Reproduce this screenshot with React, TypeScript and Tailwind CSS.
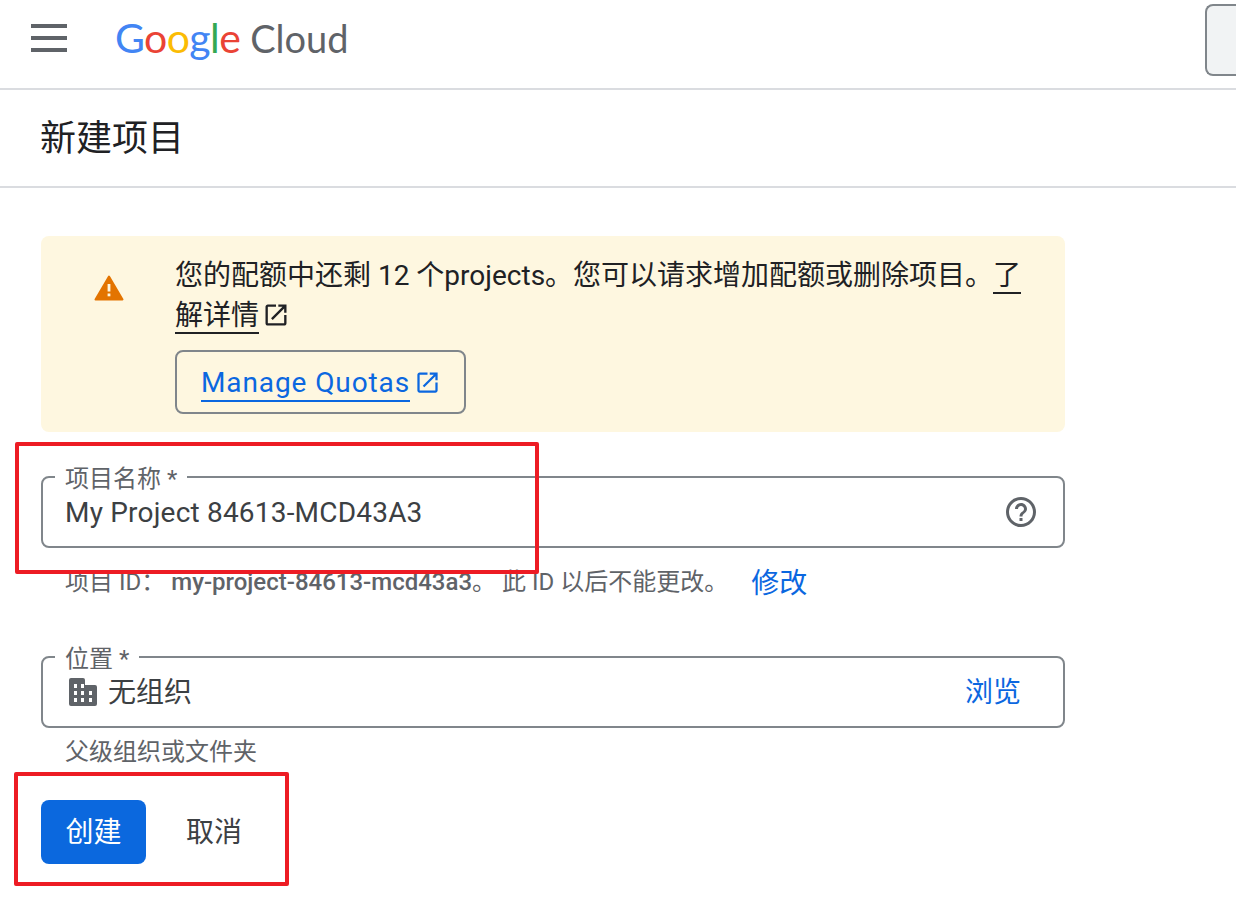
import React from "react";

const OpenIcon = ({ className }: { className: string }) => (
  <svg viewBox="0 0 24 24" fill="currentColor" className={className}>
    <path d="M19 19H5V5h7V3H5c-1.11 0-2 .9-2 2v14c0 1.1.89 2 2 2h14c1.1 0 2-.9 2-2v-7h-2v7zM14 3v2h3.59l-9.83 9.83 1.41 1.41L19 6.41V10h2V3h-7z" />
  </svg>
);

const Field = ({ label, children }: { label: string; children: React.ReactNode }) => (
  <div className="relative h-[72px] rounded-lg border-2 border-[#80868b] flex items-center pl-[22px] pr-[30px]">
    <span className="absolute left-[12px] top-[-15px] bg-white px-[10px] h-[28px] pt-[2px] text-[24px] leading-[28px] text-[#5f6368]">{label}</span>
    {children}
  </div>
);

export default function App() {
  return (
    <div
      className="relative w-[1236px] h-[898px] overflow-hidden bg-white text-[#202124]"
      style={{ fontFamily: 'Roboto, "Noto Sans CJK SC", sans-serif' }}
    >
      <header className="h-[90px] border-b-2 border-[#dadce0] flex items-center justify-between pl-[31px] pb-[2px]">
        <div className="flex items-center">
          <div className="w-[36px] flex flex-col gap-[8px] mr-[48px] mt-[-10px]">
            <div className="h-[4px] bg-[#5f6368]" />
            <div className="h-[4px] bg-[#5f6368]" />
            <div className="h-[4px] bg-[#5f6368]" />
          </div>
          <div className="flex items-baseline text-[41px] leading-[50px] mt-[-11px] whitespace-nowrap" style={{ fontFamily: 'Lato, sans-serif' }}>
            <span className="tracking-[-0.6px]">
              <span className="text-[#4285f4]">G</span>
              <span className="text-[#ea4335]">o</span>
              <span className="text-[#fbbc04]">o</span>
              <span className="text-[#4285f4]">g</span>
              <span className="text-[#34a853]">l</span>
              <span className="text-[#ea4335]">e</span>
            </span>
            <span className="ml-[10px] text-[#5f6368] text-[38px]">Cloud</span>
          </div>
        </div>
        <div className="w-[31px] h-[72px] mt-[-6px] rounded-l-lg border-2 border-r-0 border-[#80868b] bg-[#f1f3f4]" />
      </header>

      <div className="h-[98px] border-b-2 border-[#dadce0] flex items-center pl-[40px] pt-[2px] text-[36px] leading-[44px]">
        新建项目
      </div>

      <main className="w-[1024px] ml-[41px] mt-[48px]">
        <section className="h-[196px] rounded-lg bg-[#fef7e0] flex pt-[20px]">
          <svg viewBox="0 0 30 26" className="w-[30px] h-[26px] ml-[53px] mr-[51px] mt-[19px] shrink-0">
            <path
              d="M15 1.5 28.5 24.5H1.5Z"
              fill="#e37400"
              stroke="#e37400"
              strokeWidth="2"
              strokeLinejoin="round"
            />
            <rect x="13.6" y="9" width="2.8" height="7.5" fill="#fef7e0" />
            <rect x="13.6" y="18.5" width="2.8" height="2.8" fill="#fef7e0" />
          </svg>
          <div className="w-[850px]">
            <p className="text-[28px] leading-[40px] text-[#202124]">
              您的配额中还剩 12 个projects。您可以请求增加配额或删除项目。
              <span className="border-b-2 border-[#202124]">了解详情</span>
              <OpenIcon className="inline-block w-[28px] h-[28px] ml-[3px] align-[-4px]" />
            </p>
            <div className="mt-[14px] inline-flex items-center h-[64px] w-[291px] rounded-lg border-2 border-[#80868b] pl-[24px] text-[#0b67e0]">
              <span className="text-[28px] leading-[35px] border-b-2 border-[#0b67e0] tracking-[0.9px] mt-[3px]">Manage Quotas</span>
              <OpenIcon className="w-[27px] h-[27px] ml-[4px] mt-[1px]" />
            </div>
          </div>
        </section>

        <div className="mt-[44px]">
          <Field label="项目名称 *">
            <span className="flex-1 text-[28px] leading-[36px] text-[#3c4043] pt-[2px] tracking-[0.2px]">My Project 84613-MCD43A3</span>
            <svg viewBox="0 0 24 24" fill="#5f6368" className="w-[36px] h-[36px] mr-[-6px]">
              <path d="M11 18h2v-2h-2v2zm1-16C6.48 2 2 6.48 2 12s4.48 10 10 10 10-4.48 10-10S17.52 2 12 2zm0 18c-4.41 0-8-3.59-8-8s3.59-8 8-8 8 3.59 8 8-3.59 8-8 8zm0-14c-2.21 0-4 1.79-4 4h2c0-1.1.9-2 2-2s2 .9 2 2c0 2-3 1.75-3 5h2c0-2.25 3-2.5 3-5 0-2.21-1.79-4-4-4z" />
            </svg>
          </Field>
          <div className="flex items-center h-[36px] mt-[16px] pl-[24px] whitespace-nowrap text-[24px] leading-[36px] text-[#5f6368]">
            <span>项目 ID：</span>
            <span className="ml-[6px] font-medium">my-project-84613-mcd43a3</span>
            <span>。</span>
            <span className="ml-[6px]">此 ID 以后不能更改。</span>
            <span className="ml-[23px] pt-[4px] text-[28px] text-[#0b67e0]">修改</span>
          </div>
        </div>

        <div className="mt-[56px]">
          <Field label="位置 *">
            <svg viewBox="0 0 28 28" fill="#5f6368" fillRule="evenodd" className="w-[28px] h-[28px] mr-[11px] ml-[4px] shrink-0">
              <path d="M2 0h12a2 2 0 0 1 2 2v5h10a2 2 0 0 1 2 2v17a2 2 0 0 1-2 2H2a2 2 0 0 1-2-2V2a2 2 0 0 1 2-2ZM5 6v4h3V6ZM12 6v4h3V6ZM5 13v4h3v-4ZM12 13v4h3v-4ZM20 13v4h3v-4ZM5 20v4h3v-4ZM12 20v4h3v-4ZM20 20v4h3v-4Z" />
            </svg>
            <span className="flex-1 text-[28px] leading-[36px] text-[#3c4043] pt-[2px]">无组织</span>
            <span className="text-[28px] leading-[36px] text-[#0b67e0] mr-[12px] pt-[2px]">浏览</span>
          </Field>
          <div className="h-[36px] mt-[6px] pl-[24px] text-[24px] leading-[36px] text-[#5f6368]">父级组织或文件夹</div>
        </div>

        <div className="flex items-center mt-[30px]">
          <button className="w-[105px] h-[64px] rounded-lg bg-[#0b68de] text-white text-[28px] pt-[2px]">创建</button>
          <button className="ml-[40px] text-[28px] text-[#3c4043] pt-[2px]">取消</button>
        </div>
      </main>

      <div className="absolute left-[15px] top-[442px] w-[524px] h-[132px] border-4 border-[#ed1c24] rounded-[2px]" />
      <div className="absolute left-[14px] top-[772px] w-[275px] h-[114px] border-4 border-[#ed1c24] rounded-[2px]" />
    </div>
  );
}
